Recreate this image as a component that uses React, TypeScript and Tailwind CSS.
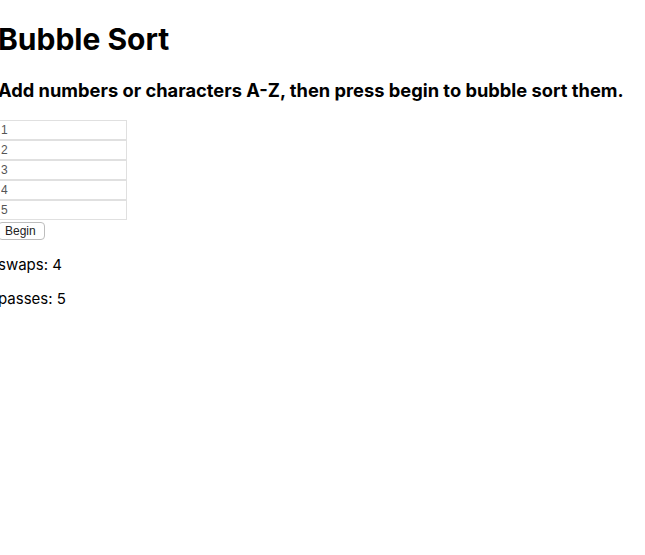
export default function App() {
  return (
    <div className="font-['Inter',sans-serif] text-black -ml-[2px]">
      <h1 className="text-[30px] font-bold leading-[36px] mt-[21px] mb-[22px]">Bubble Sort</h1>
      <h2 className="text-[18.3px] font-bold leading-[22px] mb-[19px] whitespace-nowrap">
        Add numbers or characters A-Z, then press begin to bubble sort them.
      </h2>
      <div className="flex flex-col w-[129px]">
        {["1", "2", "3", "4", "5"].map((v) => (
          <input
            key={v}
            defaultValue={v}
            className="h-[20px] border border-[#e0e0e0] px-[2px] text-[12px] font-['Liberation_Sans',sans-serif] text-[#555]"
          />
        ))}
      </div>
      <button className="block mt-[2px] h-[18px] pl-[6px] pr-[8px] border border-[#bdbdbd] rounded-[4px] bg-white text-[12px] leading-none font-['Liberation_Sans',sans-serif] text-[#222]">
        Begin
      </button>
      <p className="text-[15px] leading-[20px] mt-[15px]">swaps: 4</p>
      <p className="text-[15px] leading-[20px] mt-[14px]">passes: 5</p>
    </div>
  );
}
